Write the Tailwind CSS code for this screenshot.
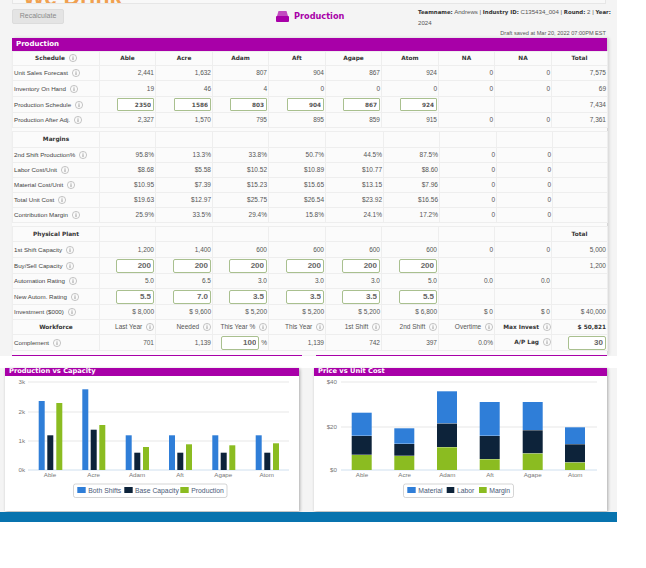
<!doctype html>
<html>
<head>
<meta charset="utf-8">
<script src="https://cdn.jsdelivr.net/npm/@tailwindcss/browser@4"></script>
</head>
<body class="bg-white font-['Liberation_Sans',sans-serif]">
<svg class="hidden"><defs><symbol id="i" viewBox="0 0 10 10"><circle cx="5" cy="5" r="4.5" fill="none" stroke="#9a9a9a" stroke-width="0.7"/><rect x="4.5" y="4" width="1" height="3.6" fill="#8a8a8a"/><rect x="4.5" y="2.2" width="1" height="1" fill="#8a8a8a"/></symbol></defs></svg>
<div class="w-[617px] h-[522px] bg-[#f4f4f4] flex flex-col overflow-hidden">
  <div class="shrink-0 ml-[12px] w-[594px] h-[4px] bg-[#f8f8f8] border-b border-x border-[#e6e6e6] overflow-hidden relative">
    <div class="absolute left-[10px] bottom-[-5px] text-[23px] leading-[22px] font-bold text-[#f0a050] whitespace-nowrap">We Drink</div>
  </div>
  <div class="shrink-0 h-[34px] ml-[12px] w-[595px] flex relative">
    <button class="mt-[5px] w-[52px] h-[15px] rounded-[2px] bg-[#e4e4e4] border border-[#dcdcdc] text-[7px] text-[#8a8a8a]">Recalculate</button>
    <div class="absolute left-[264px] top-[6px] flex items-center gap-[5px]">
      <svg width="13" height="11" viewBox="0 0 13 11"><path d="M2.5 0h8l1.5 5H1z" fill="#c24cc0"/><rect x="0" y="5" width="13" height="6" rx="1" fill="#a800a8"/></svg>
      <span class="font-['DejaVu_Sans',sans-serif] font-bold text-[8.2px] text-[#a800a8]">Production</span>
    </div>
    <div class="absolute left-[406px] top-[3px] w-[188px] text-[6.1px] leading-[10.5px] text-[#555] whitespace-nowrap"><b class="text-[#333] text-[5.4px] font-['DejaVu_Sans',sans-serif]">Teamname:</b> Andrews | <b class="text-[#333] text-[5.4px] font-['DejaVu_Sans',sans-serif]">Industry ID:</b> C135434_004 | <b class="text-[#333] text-[5.4px] font-['DejaVu_Sans',sans-serif]">Round:</b> 2 | <b class="text-[#333] text-[5.4px] font-['DejaVu_Sans',sans-serif]">Year:</b><br>2024</div>
    <div class="absolute right-[1px] top-[26px] text-[5.6px] leading-[7px] text-[#555] whitespace-nowrap">Draft saved at Mar 20, 2022 07:00PM EST</div>
  </div>
  <div class="shrink-0 ml-[12px] w-[595px] shadow-[2px_0_3px_rgba(0,0,0,0.15)] bg-[#fbfbfb]">
    <div class="h-[13px] bg-[#a800a8] text-white font-bold text-[7px] leading-[13px] pl-[4px] font-['DejaVu_Sans',sans-serif]">Production</div>
    <table class="table-fixed w-[595px] border-collapse text-[6.5px] text-[#555] [&_td]:border [&_td]:border-[#eeeeee] [&_td]:p-0 [&_td]:pr-[1px] [&_td]:text-right [&_th]:border [&_th]:border-[#eeeeee] [&_th]:p-0 [&_th]:font-bold [&_th]:text-[#333] [&_th]:font-['DejaVu_Sans',sans-serif] [&_th]:text-[5.8px] [&_td:first-child]:text-left [&_td:first-child]:text-[6.2px] [&_td:first-child]:text-[#444] [&_td:first-child]:pl-[1px] [&_svg]:inline-block [&_svg]:ml-[2px] [&_svg]:align-[-2px] [&_input]:inline-block [&_input]:align-middle [&_input]:w-[37px] [&_input]:h-[13px] [&_input]:bg-white [&_input]:border [&_input]:border-[#a9c08f] [&_input]:rounded-[1px] [&_input]:text-right [&_input]:pr-[2px] [&_input]:font-bold [&_input]:font-['DejaVu_Sans',sans-serif] [&_input]:text-[5.8px] [&_input]:text-[#555]">
      <colgroup><col class="w-[87px]"><col class="w-[56px]"><col class="w-[57px]"><col class="w-[56px]"><col class="w-[57px]"><col class="w-[56px]"><col class="w-[57px]"><col class="w-[56px]"><col class="w-[57px]"><col class="w-[56px]"></colgroup>
      <tr class="h-[14px]"><th>Schedule <svg width="8" height="8"><use href="#i"/></svg></th><th>Able</th><th>Acre</th><th>Adam</th><th>Aft</th><th>Agape</th><th>Atom</th><th>NA</th><th>NA</th><th>Total</th></tr>
      <tr class="h-[15px]"><td>Unit Sales Forecast <svg width="8" height="8"><use href="#i"/></svg></td><td>2,441</td><td>1,632</td><td>807</td><td>904</td><td>867</td><td>924</td><td>0</td><td>0</td><td>7,575</td></tr>
      <tr class="h-[16px]"><td>Inventory On Hand <svg width="8" height="8"><use href="#i"/></svg></td><td>19</td><td>46</td><td>4</td><td>0</td><td>0</td><td>0</td><td>0</td><td>0</td><td>69</td></tr>
      <tr class="h-[16px]"><td>Production Schedule <svg width="8" height="8"><use href="#i"/></svg></td><td><input value="2350"></td><td><input value="1586"></td><td><input value="803"></td><td><input value="904"></td><td><input value="867"></td><td><input value="924"></td><td></td><td></td><td>7,434</td></tr>
      <tr class="h-[15px]"><td>Production After Adj. <svg width="8" height="8"><use href="#i"/></svg></td><td>2,327</td><td>1,570</td><td>795</td><td>895</td><td>859</td><td>915</td><td>0</td><td>0</td><td>7,361</td></tr>
    </table>
    <table class="mt-[3px] table-fixed w-[595px] border-collapse text-[6.5px] text-[#555] [&_td]:border [&_td]:border-[#eeeeee] [&_td]:p-0 [&_td]:pr-[1px] [&_td]:text-right [&_th]:border [&_th]:border-[#eeeeee] [&_th]:p-0 [&_th]:font-bold [&_th]:text-[#333] [&_th]:font-['DejaVu_Sans',sans-serif] [&_th]:text-[5.8px] [&_td:first-child]:text-left [&_td:first-child]:text-[6.2px] [&_td:first-child]:text-[#444] [&_td:first-child]:pl-[1px] [&_svg]:inline-block [&_svg]:ml-[2px] [&_svg]:align-[-2px]">
      <colgroup><col class="w-[87px]"><col class="w-[56px]"><col class="w-[57px]"><col class="w-[56px]"><col class="w-[57px]"><col class="w-[58px]"><col class="w-[56px]"><col class="w-[57px]"><col class="w-[56px]"><col class="w-[55px]"></colgroup>
      <tr class="h-[16px]"><th>Margins</th><td></td><td></td><td></td><td></td><td></td><td></td><td></td><td></td><td></td></tr>
      <tr class="h-[15px]"><td>2nd Shift Production% <svg width="8" height="8"><use href="#i"/></svg></td><td>95.8%</td><td>13.3%</td><td>33.8%</td><td>50.7%</td><td>44.5%</td><td>87.5%</td><td>0</td><td>0</td><td></td></tr>
      <tr class="h-[15px]"><td>Labor Cost/Unit <svg width="8" height="8"><use href="#i"/></svg></td><td>$8.68</td><td>$5.58</td><td>$10.52</td><td>$10.89</td><td>$10.77</td><td>$8.60</td><td>0</td><td>0</td><td></td></tr>
      <tr class="h-[15px]"><td>Material Cost/Unit <svg width="8" height="8"><use href="#i"/></svg></td><td>$10.95</td><td>$7.39</td><td>$15.23</td><td>$15.65</td><td>$13.15</td><td>$7.96</td><td>0</td><td>0</td><td></td></tr>
      <tr class="h-[15px]"><td>Total Unit Cost <svg width="8" height="8"><use href="#i"/></svg></td><td>$19.63</td><td>$12.97</td><td>$25.75</td><td>$26.54</td><td>$23.92</td><td>$16.56</td><td>0</td><td>0</td><td></td></tr>
      <tr class="h-[15px]"><td>Contribution Margin <svg width="8" height="8"><use href="#i"/></svg></td><td>25.9%</td><td>33.5%</td><td>29.4%</td><td>15.8%</td><td>24.1%</td><td>17.2%</td><td>0</td><td>0</td><td></td></tr>
    </table>
    <table class="mt-[3px] table-fixed w-[595px] border-collapse text-[6.5px] text-[#555] [&_td]:border [&_td]:border-[#eeeeee] [&_td]:p-0 [&_td]:pr-[1px] [&_td]:text-right [&_th]:border [&_th]:border-[#eeeeee] [&_th]:p-0 [&_th]:font-bold [&_th]:text-[#333] [&_th]:font-['DejaVu_Sans',sans-serif] [&_th]:text-[5.8px] [&_td:first-child]:text-left [&_td:first-child]:text-[6.2px] [&_td:first-child]:text-[#444] [&_td:first-child]:pl-[1px] [&_svg]:inline-block [&_svg]:ml-[2px] [&_svg]:align-[-2px] [&_input]:inline-block [&_input]:align-middle [&_input]:w-[38px] [&_input]:h-[14px] [&_input]:bg-white [&_input]:border [&_input]:border-[#a9c08f] [&_input]:rounded-[2px] [&_input]:text-right [&_input]:pr-[2px] [&_input]:text-[8px] [&_input]:font-bold [&_input]:font-['Liberation_Sans',sans-serif] [&_input]:text-[#666]">
      <colgroup><col class="w-[87px]"><col class="w-[56px]"><col class="w-[57px]"><col class="w-[56px]"><col class="w-[57px]"><col class="w-[56px]"><col class="w-[57px]"><col class="w-[56px]"><col class="w-[57px]"><col class="w-[56px]"></colgroup>
      <tr class="h-[15px]"><th>Physical Plant</th><td></td><td></td><td></td><td></td><td></td><td></td><td></td><td></td><th>Total</th></tr>
      <tr class="h-[16px]"><td>1st Shift Capacity <svg width="8" height="8"><use href="#i"/></svg></td><td>1,200</td><td>1,400</td><td>600</td><td>600</td><td>600</td><td>600</td><td>0</td><td>0</td><td>5,000</td></tr>
      <tr class="h-[16px]"><td>Buy/Sell Capacity <svg width="8" height="8"><use href="#i"/></svg></td><td><input value="200"></td><td><input value="200"></td><td><input value="200"></td><td><input value="200"></td><td><input value="200"></td><td><input value="200"></td><td></td><td></td><td>1,200</td></tr>
      <tr class="h-[15px]"><td>Automation Rating <svg width="8" height="8"><use href="#i"/></svg></td><td>5.0</td><td>6.5</td><td>3.0</td><td>3.0</td><td>3.0</td><td>5.0</td><td>0.0</td><td>0.0</td><td></td></tr>
      <tr class="h-[16px]"><td>New Autom. Rating <svg width="8" height="8"><use href="#i"/></svg></td><td><input value="5.5"></td><td><input value="7.0"></td><td><input value="3.5"></td><td><input value="3.5"></td><td><input value="3.5"></td><td><input value="5.5"></td><td></td><td></td><td></td></tr>
      <tr class="h-[15px]"><td>Investment ($000) <svg width="8" height="8"><use href="#i"/></svg></td><td>$ 8,000</td><td>$ 9,600</td><td>$ 5,200</td><td>$ 5,200</td><td>$ 5,200</td><td>$ 6,800</td><td>$ 0</td><td>$ 0</td><td>$ 40,000</td></tr>
      <tr class="h-[15px]"><th>Workforce</th><td>Last Year <svg width="8" height="8"><use href="#i"/></svg></td><td>Needed <svg width="8" height="8"><use href="#i"/></svg></td><td>This Year % <svg width="8" height="8"><use href="#i"/></svg></td><td>This Year <svg width="8" height="8"><use href="#i"/></svg></td><td>1st Shift <svg width="8" height="8"><use href="#i"/></svg></td><td>2nd Shift <svg width="8" height="8"><use href="#i"/></svg></td><td>Overtime <svg width="8" height="8"><use href="#i"/></svg></td><th class="!text-right">Max Invest <svg width="8" height="8"><use href="#i"/></svg></th><th class="!text-right !pr-[1px]">$ 50,821</th></tr>
      <tr class="h-[16px]"><td>Complement <svg width="8" height="8"><use href="#i"/></svg></td><td>701</td><td>1,139</td><td><input class="!w-[38px]" value="100"> %</td><td>1,139</td><td>742</td><td>397</td><td>0.0%</td><th class="!text-right">A/P Lag <svg width="8" height="8"><use href="#i"/></svg></th><td><input value="30"></td></tr>
    </table>
    <div class="h-[4px]"></div>
  </div>
  <div class="shrink-0 ml-[12px] w-[595px] h-[1px] flex justify-between bg-[#f4f4f4]"><div class="w-[290px] bg-[#a800a8]"></div><div class="w-[291px] bg-[#a800a8]"></div></div>
  <div class="h-[12px] bg-white shrink-0"></div>
  <div class="flex h-[143px] shrink-0 ml-[5px] gap-[15px]">
    <div class="w-[294px] bg-white shadow-[1px_1px_3px_rgba(0,0,0,0.3)]">
      <div class="h-[8px] bg-[#a800a8] text-white font-bold text-[6.7px] leading-[6px] pl-[4px] overflow-hidden font-['DejaVu_Sans',sans-serif]">Production vs Capacity</div>
      <svg width="294" height="135" viewBox="5 376 294 135" font-family="Liberation Sans" font-size="6.2" fill="#777">
        <g stroke="#e8e8e8" stroke-width="1.2"><path d="M28 382H289M28 412H289M28 441H289"/></g>
        <path d="M28 470H289" stroke="#cfe0ef"/>
        <g text-anchor="end"><text x="25" y="384">3k</text><text x="25" y="414">2k</text><text x="25" y="443">1k</text><text x="25" y="472">0k</text></g>
        <g fill="#2f7ed8"><rect x="38.7" y="401" width="6" height="69"/><rect x="82.3" y="389.3" width="6" height="80.7"/><rect x="125.7" y="435.3" width="6" height="34.7"/><rect x="169" y="435.3" width="6" height="34.7"/><rect x="212.3" y="435.3" width="6" height="34.7"/><rect x="255.7" y="435.3" width="6" height="34.7"/></g>
        <g fill="#0d233a"><rect x="47.3" y="435.3" width="6" height="34.7"/><rect x="90.7" y="429.7" width="6" height="40.3"/><rect x="134.3" y="452.7" width="6" height="17.3"/><rect x="177.3" y="452.7" width="6" height="17.3"/><rect x="220.7" y="452.7" width="6" height="17.3"/><rect x="264.3" y="452.7" width="6" height="17.3"/></g>
        <g fill="#8bbc21"><rect x="56.3" y="403" width="6" height="67"/><rect x="99.3" y="425" width="6" height="45"/><rect x="143" y="447" width="6" height="23"/><rect x="186" y="444.3" width="6" height="25.7"/><rect x="229.3" y="445.3" width="6" height="24.7"/><rect x="273" y="443.3" width="6" height="26.7"/></g>
        <g text-anchor="middle"><text x="50" y="477">Able</text><text x="93.7" y="477">Acre</text><text x="137" y="477">Adam</text><text x="180" y="477">Aft</text><text x="223.3" y="477">Agape</text><text x="266.7" y="477">Atom</text></g>
        <rect x="73.5" y="484" width="153.5" height="13.5" rx="2" fill="#fff" stroke="#b8b8b8" stroke-width="0.6"/>
        <rect x="77.3" y="487" width="8.4" height="6" fill="#2f7ed8"/><rect x="124.3" y="487" width="8.4" height="6" fill="#0d233a"/><rect x="180.3" y="487" width="8.4" height="6" fill="#8bbc21"/>
        <g fill="#4a5a78" font-size="6.8"><text x="88.3" y="492.7">Both Shifts</text><text x="135" y="492.7">Base Capacity</text><text x="191.3" y="492.7">Production</text></g>
      </svg>
    </div>
    <div class="w-[293px] bg-white shadow-[1px_1px_3px_rgba(0,0,0,0.3)]">
      <div class="h-[8px] bg-[#a800a8] text-white font-bold text-[6.7px] leading-[6px] pl-[4px] overflow-hidden font-['DejaVu_Sans',sans-serif]">Price vs Unit Cost</div>
      <svg width="293" height="135" viewBox="314 376 293 135" font-family="Liberation Sans" font-size="6.2" fill="#777">
        <g stroke="#e8e8e8" stroke-width="1.2"><path d="M341 382H597M341 427H597"/></g>
        <path d="M341 470H597" stroke="#cfe0ef"/>
        <g text-anchor="end"><text x="337" y="384">$40</text><text x="337" y="428.5">$20</text><text x="337" y="472">$0</text></g>
        <g fill="#2f7ed8"><rect x="351.7" y="412.7" width="20" height="23"/><rect x="394.3" y="428.3" width="20" height="15.4"/><rect x="437" y="391.3" width="20" height="32"/><rect x="479.7" y="402" width="20" height="33.7"/><rect x="522.7" y="402" width="20" height="28"/><rect x="565" y="427.3" width="20" height="16.7"/></g>
        <g fill="#0d233a"><rect x="351.7" y="436" width="20" height="18.7"/><rect x="394.3" y="444" width="20" height="11.7"/><rect x="437" y="423.6" width="20" height="23.4"/><rect x="479.7" y="436" width="20" height="23"/><rect x="522.7" y="430.3" width="20" height="23"/><rect x="565" y="444.3" width="20" height="18"/></g>
        <g fill="#8bbc21"><rect x="351.7" y="455" width="20" height="15"/><rect x="394.3" y="456" width="20" height="14"/><rect x="437" y="447.3" width="20" height="22.7"/><rect x="479.7" y="459.3" width="20" height="10.7"/><rect x="522.7" y="453.6" width="20" height="16.4"/><rect x="565" y="462.6" width="20" height="7.4"/></g>
        <g text-anchor="middle"><text x="362" y="477">Able</text><text x="404.7" y="477">Acre</text><text x="447.3" y="477">Adam</text><text x="490" y="477">Aft</text><text x="532.7" y="477">Agape</text><text x="575.3" y="477">Atom</text></g>
        <rect x="403.5" y="484" width="110" height="13.5" rx="2" fill="#fff" stroke="#b8b8b8" stroke-width="0.6"/>
        <rect x="407.3" y="487" width="8.4" height="6" fill="#2f7ed8"/><rect x="446.7" y="487" width="7.6" height="6" fill="#0d233a"/><rect x="479" y="487" width="7.7" height="6" fill="#8bbc21"/>
        <g fill="#4a5a78" font-size="6.8"><text x="418.3" y="492.7">Material</text><text x="457" y="492.7">Labor</text><text x="489.3" y="492.7">Margin</text></g>
      </svg>
    </div>
  </div>
  <div class="h-[1px] shrink-0"></div>
  <div class="h-[10px] shrink-0 bg-[#0873ae]"></div>
</div>
</body>
</html>
